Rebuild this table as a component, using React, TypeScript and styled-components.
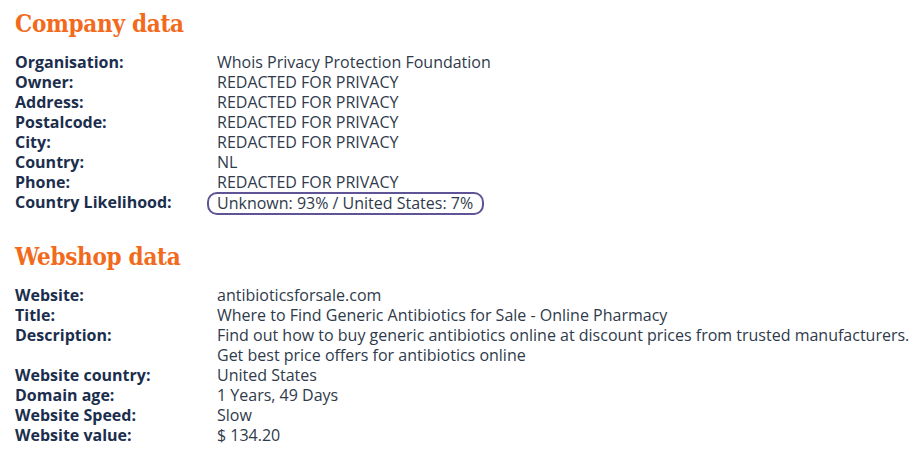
import React from "react";
import styled, { createGlobalStyle } from "styled-components";

const GlobalStyle = createGlobalStyle`
  body {
    margin: 0;
    background: #ffffff;
    font-family: "Open Sans", "Liberation Sans", sans-serif;
  }
`;

type Row = { label: string; value: string[]; highlight?: boolean };

const company: Row[] = [
  { label: "Organisation:", value: ["Whois Privacy Protection Foundation"] },
  { label: "Owner:", value: ["REDACTED FOR PRIVACY"] },
  { label: "Address:", value: ["REDACTED FOR PRIVACY"] },
  { label: "Postalcode:", value: ["REDACTED FOR PRIVACY"] },
  { label: "City:", value: ["REDACTED FOR PRIVACY"] },
  { label: "Country:", value: ["NL"] },
  { label: "Phone:", value: ["REDACTED FOR PRIVACY"] },
  { label: "Country Likelihood:", value: ["Unknown: 93% / United States: 7%"], highlight: true },
];

const webshop: Row[] = [
  { label: "Website:", value: ["antibioticsforsale.com"] },
  { label: "Title:", value: ["Where to Find Generic Antibiotics for Sale - Online Pharmacy"] },
  {
    label: "Description:",
    value: [
      "Find out how to buy generic antibiotics online at discount prices from trusted manufacturers.",
      "Get best price offers for antibiotics online",
    ],
  },
  { label: "Website country:", value: ["United States"] },
  { label: "Domain age:", value: ["1 Years, 49 Days"] },
  { label: "Website Speed:", value: ["Slow"] },
  { label: "Website value:", value: ["$ 134.20"] },
];

export default function App() {
  return (
    <Page>
      <GlobalStyle />
      <Section>
        <Heading>Company data</Heading>
        <DataTable rows={company} />
      </Section>
      <Section>
        <Heading>Webshop data</Heading>
        <DataTable rows={webshop} />
      </Section>
    </Page>
  );
}

function DataTable({ rows }: { rows: Row[] }) {
  return (
    <Grid>
      {rows.map((r) => (
        <React.Fragment key={r.label}>
          <Label>{r.label}</Label>
          <Value>
            {r.highlight ? (
              <Circled>{r.value[0]}</Circled>
            ) : (
              r.value.map((line) => <div key={line}>{line}</div>)
            )}
          </Value>
        </React.Fragment>
      ))}
    </Grid>
  );
}

const Page = styled.div`
  padding: 9px 0 0 15px;
  width: 924px;
  box-sizing: border-box;
`;

const Section = styled.section`
  & + & {
    margin-top: 27px;
  }
`;

const Heading = styled.h2`
  margin: 0 0 13px;
  font-family: "DejaVu Serif Condensed", "DejaVu Serif", "Liberation Serif", serif;
  font-stretch: condensed;
  font-weight: bold;
  font-size: 24px;
  line-height: 30px;
  letter-spacing: -0.3px;
  color: #f26a1b;
`;

const Grid = styled.div`
  display: grid;
  grid-template-columns: 202px 1fr;
  font-size: 16px;
  line-height: 20px;
`;

const Label = styled.div`
  font-weight: 700;
  color: #1b2e4d;
`;

const Value = styled.div`
  color: #2f3a4b;
`;

const Circled = styled.span`
  display: inline-block;
  margin-left: -10px;
  padding: 0 9px 0 8px;
  border: 2px solid #5f5496;
  border-radius: 10px;
  line-height: 19px;
`;
